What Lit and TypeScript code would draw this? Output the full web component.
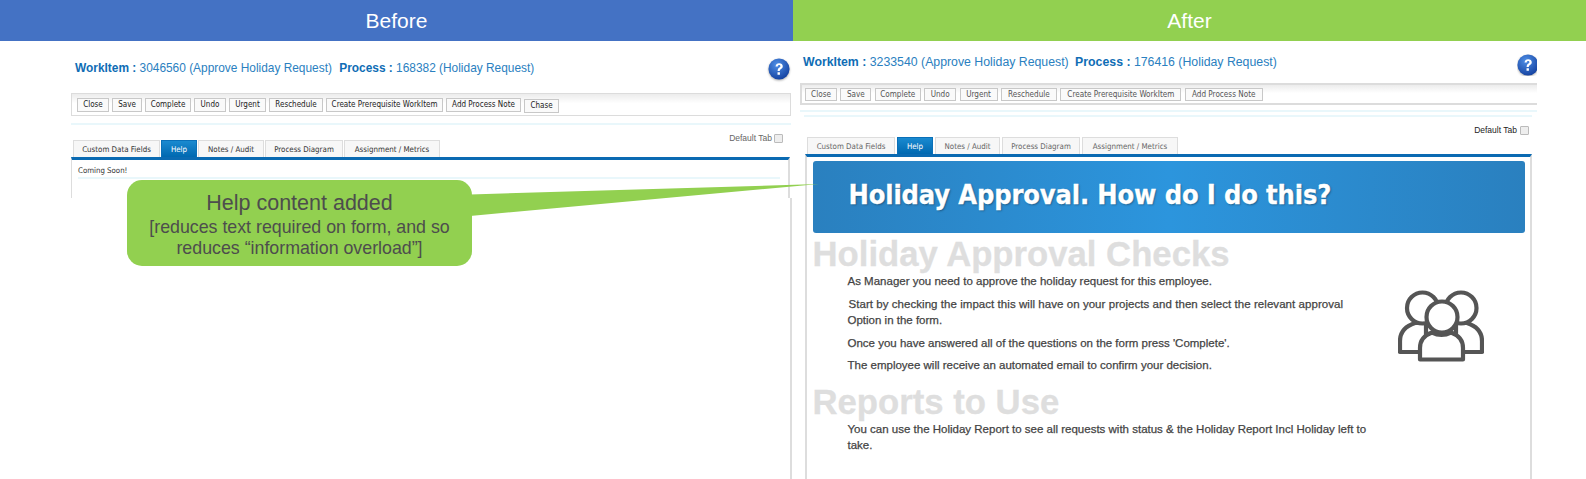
import { LitElement, html, css, svg } from "lit";
import { customElement } from "lit/decorators.js";

const tabs = ["Custom Data Fields", "Help", "Notes / Audit", "Process Diagram", "Assignment / Metrics"];
const buttons = ["Close", "Save", "Complete", "Undo", "Urgent", "Reschedule", "Create Prerequisite WorkItem", "Add Process Note"];
const widths = {
  before: { btn: [32, 30, 46, 32, 37, 54, 117, 75], tab: [87, 36, 66, 78, 96] },
  after: { btn: [32, 31, 46, 32, 38, 56, 121, 78], tab: [88, 36, 65, 78, 96] },
};

const helpIcon = html`<svg class="help" viewBox="0 0 24 24" aria-hidden="true">
  <defs><radialGradient id="hg" cx="40%" cy="30%" r="75%"><stop offset="0" stop-color="#4f8fe6"/><stop offset="1" stop-color="#123f9e"/></radialGradient></defs>
  <circle cx="12" cy="12" r="11.5" fill="url(#hg)"/>
  <path d="M8.2 9.2c.2-2.3 1.8-3.6 4-3.6 2.3 0 3.9 1.3 3.9 3.3 0 1.5-.8 2.3-1.9 3.1-1 .7-1.3 1.1-1.3 2.2h-2.4c0-1.8.5-2.6 1.7-3.5.9-.7 1.3-1.1 1.3-1.7 0-.8-.6-1.3-1.4-1.3-.9 0-1.4.6-1.5 1.5z M10.4 15.6h2.6v2.6h-2.6z" fill="#fff"/>
</svg>`;

const peopleIcon = svg`<g fill="#fff" stroke="#555" stroke-width="4.2" stroke-linejoin="round">
  <path d="M2 62V51C2 42 8 36 17 33H28V62Z"/>
  <path d="M84 62V51C84 42 78 36 69 33H58V62Z"/>
  <circle cx="24.5" cy="18" r="15.5"/>
  <circle cx="63" cy="18" r="15.5"/>
  <path d="M22 69.5V58C22 50 27 45 34 42.5C40 45.5 47 45.5 53 42.5C60 45 65 50 65 58V69.5Z"/>
  <circle cx="44" cy="27" r="15.5"/>
</g>`;

@customElement("app-root")
export class AppRoot extends LitElement {
  static styles = css`
    :host { display: block; width: 1586px; height: 479px; overflow: hidden; position: relative; background: #fff; font-family: "Liberation Sans", Arial, sans-serif; }
    .page { display: grid; grid-template-columns: 793px 793px; height: 479px; }
    .col { display: flex; flex-direction: column; min-width: 0; }
    .bar { height: 41px; flex: none; display: flex; align-items: center; justify-content: center; color: #fff; font-size: 21px; }
    .bar.blue { background: #4472c4; }
    .bar.green { background: #92d050; }

    .form { flex: 1; display: flex; flex-direction: column; min-height: 0; }
    .before .form { padding: 15px 2px 0 71px; }
    .after .form { padding: 9px 49px 0 7px; }

    .head { display: flex; align-items: center; justify-content: space-between; height: 24px; color: #2a80c0; padding-left: 4px; }
    .before .head { font-size: 11.9px; }
    .after .head { font-size: 12.3px; padding-left: 3px; }
    .head b { color: #0f6db5; }
    .head span + span { margin-left: 4px; }
    .after .head span + span { margin-left: 3px; }
    .help { width: 22px; height: 22px; flex: none; filter: drop-shadow(0 1px 1px #aaa); }
    .before .help { transform: translate(-1px, 1px); }
    .after .help { margin-right: -2px; clip-path: inset(0 2px 0 0); transform: translateY(3px); }

    .toolbar { display: flex; gap: 3px; align-items: center; height: 23px; box-sizing: border-box; border: 1px solid #dcdcdc; background: linear-gradient(#ececec, #fff 45%); padding: 0 5px; }
    .before .toolbar { margin-top: 13px; }
    .after .toolbar { margin-top: 9px; border-width: 2px 0 2px 2px; height: 22px; padding-left: 3px; gap: 3.4px; }
    .toolbar span { font-family: "DejaVu Sans", sans-serif; font-stretch: condensed; font-size: 8px; color: #222; border: 1px solid #c8c8c8; background: #fafafa; height: 12px; line-height: 12px; text-align: center; white-space: nowrap; box-sizing: content-box; }
    .after .toolbar span { font-size: 8.1px; color: #555; border-width: 1.5px; height: 11px; line-height: 11px; }
    .chase { position: relative; top: 1px; }

    .rule { height: 2px; background: #e9f7fb; }
    .before .rule { margin-top: 7px; }
    .after .rule { margin-top: 5px; }
    .after .rule.two { margin: 3px 5px 0 4px; }

    .default { display: flex; justify-content: flex-end; align-items: center; gap: 2px; font-size: 8.5px; color: #666; height: 12px; margin-top: 7px; margin-right: 8px; }
    .after .default { margin-top: 7px; margin-right: 8px; gap: 3px; color: #222; }
    .box { width: 7px; height: 7px; border: 1px solid #bbb; border-radius: 1px; background: #eee; }

    .tabs { display: flex; height: 17px; }
    .before .tabs { margin-top: -4px; padding-left: 2px; gap: 1px; }
    .after .tabs { margin-top: 1px; padding-left: 7px; gap: 2px; }
    .tab { font-family: "DejaVu Sans", sans-serif; font-stretch: condensed; font-size: 7.9px; color: #333; background: #f7f7f7; border: 1px solid #ddd; border-bottom: none; display: flex; align-items: center; justify-content: center; box-sizing: border-box; padding-top: 1px; white-space: nowrap; }
    .tab.on { color: #fff; background: linear-gradient(#1a8ad0, #0068b0); border-color: #0a70b8; }
    .after .tab { color: #666; border-width: 1.5px; }
    .after .tab.on { color: #fff; }

    .panel { border-top: 3px solid #0a6ab2; box-sizing: border-box; }
    .before .panel { height: 41px; border-left: 1px solid #ddd; border-right: 2px solid #ddd; padding: 5px 8px 0 6px; margin-right: 1px; }
    .after .panel { flex: 1; min-height: 0; margin: 0 5px 0 5px; border-left: 2px solid #ddd; border-right: 2px solid #ddd; padding: 4px 5px 0 5.5px; }
    .soon { font-family: "DejaVu Sans", sans-serif; font-stretch: condensed; font-size: 7.8px; color: #333; height: 12px; border-bottom: 2px solid #e9f7fb; line-height: 12px; }

    .banner { height: 72px; border-radius: 3px; background: linear-gradient(90deg, #2a80bf, #2c95dd 50%, #2a80bf); display: flex; align-items: center; padding: 0 0 6px 36px; box-sizing: border-box; color: #fff; font: bold 27px "DejaVu Sans", sans-serif; font-stretch: condensed; letter-spacing: -0.14px; -webkit-text-stroke: 0.3px #fff; text-shadow: 1px 1px 2px rgba(0,0,0,.35); white-space: nowrap; }
    h2 { margin: 0; color: #dedede; font: bold 34.7px "Liberation Sans", sans-serif; -webkit-text-stroke: 0.3px #dedede; line-height: 38px; white-space: nowrap; }
    .first { margin-top: 3px; line-height: 37px; }
    .body { padding-left: 35px; position: relative; font-size: 11.5px; color: #444; -webkit-text-stroke: 0.25px #444; line-height: 16.5px; }
    .body p { margin: 0 0 6px; white-space: nowrap; }
    .start { display: block; margin-left: 1px; letter-spacing: 0.05px; }
    .people { position: absolute; left: 585px; top: 17px; width: 86px; height: 72px; }
    .second { margin-top: 9px; }

    .rightline { position: absolute; left: 790px; top: 198px; bottom: 0; width: 2px; background: #ddd; }
    .tail { position: absolute; left: 470px; top: 180px; width: 352px; height: 40px; }
    .callout { position: absolute; left: 127px; top: 180px; width: 345px; height: 86px; border-radius: 15px; background: #92d050; color: #4d4d4d; text-align: center; display: flex; flex-direction: column; align-items: center; padding-top: 10px; box-sizing: border-box; font-size: 17.8px; line-height: 21px; }
    .callout .t { font-size: 21.5px; line-height: 27px; }
  `;

  private form(which: "before" | "after", id: string, proc: string) {
    const w = widths[which];
    return html`<div class="form">
      <div class="head">
        <div><span><b>WorkItem :</b> ${id} (Approve Holiday Request)</span> <span><b>Process :</b> ${proc} (Holiday Request)</span></div>
        ${helpIcon}
      </div>
      <div class="toolbar">
        ${buttons.map((b, i) => html`<span style="width:${w.btn[i] - 2}px">${b}</span>`)}
        ${which === "before" ? html`<span class="chase" style="width:33px">Chase</span>` : ""}
      </div>
      <div class="rule"></div>
      ${which === "after" ? html`<div class="rule two"></div>` : ""}
      <div class="default">Default Tab <i class="box"></i></div>
      <div class="tabs">
        ${tabs.map((t, i) => html`<div class="tab ${i === 1 ? "on" : ""}" style="width:${w.tab[i]}px">${t}</div>`)}
      </div>
      ${which === "before"
        ? html`<div class="panel"><div class="soon">Coming Soon!</div></div>`
        : html`<div class="panel">
            <div class="banner">Holiday Approval. How do I do this?</div>
            <h2 class="first">Holiday Approval Checks</h2>
            <div class="body">
              <p>As Manager you need to approve the holiday request for this employee.</p>
              <p><span class="start">Start by checking the impact this will have on your projects and then select the relevant approval</span>Option in the form.</p>
              <p>Once you have answered all of the questions on the form press 'Complete'.</p>
              <p>The employee will receive an automated email to confirm your decision.</p>
              <svg class="people" viewBox="0 0 86 72">${peopleIcon}</svg>
            </div>
            <h2 class="second">Reports to Use</h2>
            <div class="body">
              <p>You can use the Holiday Report to see all requests with status &amp; the Holiday Report Incl Holiday left to<br />take.</p>
            </div>
          </div>`}
    </div>`;
  }

  render() {
    return html`<div class="page">
        <div class="col before"><div class="bar blue">Before</div>${this.form("before", "3046560", "168382")}</div>
        <div class="col after"><div class="bar green">After</div>${this.form("after", "3233540", "176416")}</div>
      </div>
      <div class="rightline"></div>
      <svg class="tail" viewBox="0 0 352 40"><path d="M0 14.5L349 4 0 36Z" fill="#92d050"/></svg>
      <div class="callout">
        <div class="t">Help content added</div>
        <div>[reduces text required on form, and so</div>
        <div>reduces “information overload”]</div>
      </div>`;
  }
}
